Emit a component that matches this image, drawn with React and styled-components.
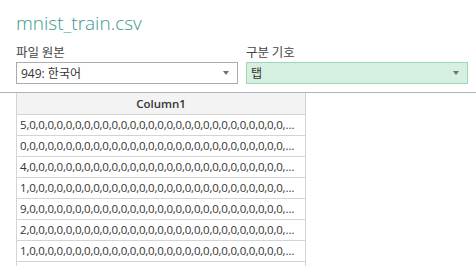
import React from 'react';
import styled, { createGlobalStyle } from 'styled-components';

const GlobalStyle = createGlobalStyle`
  body {
    margin: 0;
    background: #ffffff;
    font-family: "Open Sans", "Noto Sans CJK KR", sans-serif;
    color: #333333;
  }
`;

const Page = styled.div`
  width: 476px;
  height: 266px;
  overflow: hidden;
`;

const Title = styled.h1`
  margin: 0;
  padding: 10px 0 0 16px;
  height: 34px;
  font-size: 19px;
  font-weight: 300;
  color: #3a9a8d;
  line-height: 26px;
`;

const Fields = styled.div`
  display: flex;
  gap: 8px;
  padding: 0 8px 0 16px;
`;

const Field = styled.div`
  display: flex;
  flex-direction: column;
  width: ${(p) => p.$width}px;
`;

const Label = styled.label`
  font-size: 12.5px;
  color: #444444;
  line-height: 16px;
  height: 18px;
  font-family: "Noto Sans CJK KR", sans-serif;
`;

const Select = styled.div`
  display: flex;
  align-items: center;
  justify-content: space-between;
  height: 22px;
  box-sizing: border-box;
  padding: 0 8px 0 4px;
  border: 1px solid ${(p) => (p.$active ? '#9fd6b8' : '#acacac')};
  background: ${(p) => (p.$active ? '#d5efe1' : '#ffffff')};
  font-size: 12px;
  color: #333333;
  font-family: "Open Sans", "Noto Sans CJK KR", sans-serif;
`;

const Arrow = styled.span`
  width: 0;
  height: 0;
  border-left: 3.5px solid transparent;
  border-right: 3.5px solid transparent;
  border-top: 4px solid #707070;
`;

const TableArea = styled.div`
  margin-top: 8px;
  border-top: 1px solid #b4b4b4;
  padding-left: 16px;
`;

const Table = styled.div`
  width: 290px;
  box-sizing: border-box;
  border-left: 1px solid #d4d4d4;
  border-right: 1px solid #d4d4d4;
`;

const HeaderCell = styled.div`
  height: 21px;
  background: #f3f3f3;
  border-bottom: 1px solid #d4d4d4;
  font-size: 11.5px;
  font-weight: 600;
  text-align: center;
  line-height: 21px;
  color: #333333;
`;

const Cell = styled.div`
  height: 20px;
  line-height: 20px;
  border-bottom: 1px solid #d4d4d4;
  padding: 0 6px 0 3px;
  font-size: 11.5px;
  letter-spacing: -0.2px;
  white-space: nowrap;
  overflow: hidden;
  text-overflow: ellipsis;
  color: #333333;
`;

const labels = ['5', '0', '4', '1', '9', '2', '1', '3'];
const zeros = Array(60).fill('0').join(',');

export default function App() {
  return (
    <Page>
      <GlobalStyle />
      <Title>mnist_train.csv</Title>
      <Fields>
        <Field $width={222}>
          <Label>파일 원본</Label>
          <Select>
            <span>949: 한국어</span>
            <Arrow />
          </Select>
        </Field>
        <Field $width={222}>
          <Label>구분 기호</Label>
          <Select $active>
            <span>탭</span>
            <Arrow />
          </Select>
        </Field>
      </Fields>
      <TableArea>
        <Table>
          <HeaderCell>Column1</HeaderCell>
          {labels.map((l, i) => (
            <Cell key={i}>{l + ',' + zeros}</Cell>
          ))}
        </Table>
      </TableArea>
    </Page>
  );
}
